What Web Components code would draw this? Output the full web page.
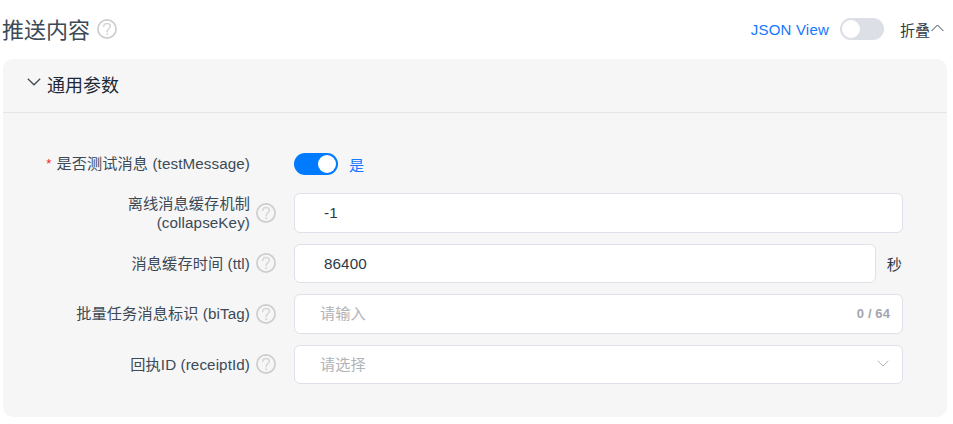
<!DOCTYPE html>
<html lang="zh">
<head>
<meta charset="utf-8">
<title>推送内容</title>
<style>
  html, body { margin: 0; background: #fff; }
  body { font-family: "Liberation Sans", "Noto Sans CJK SC", sans-serif; color: #2c3a47; }
</style>
</head>
<body>
<push-page>
  <span slot="title">推送内容</span>
  <param-panel heading="通用参数">
    <form-row required style="height:37px">
      <span slot="label">是否测试消息 (testMessage)</span>
      <toggle-switch on></toggle-switch>
      <span style="color:#1677ff;margin-left:11px">是</span>
    </form-row>
    <form-row help>
      <span slot="label">离线消息缓存机制<br>(collapseKey)</span>
      <text-box value="-1"></text-box>
    </form-row>
    <form-row help>
      <span slot="label">消息缓存时间 (ttl)</span>
      <text-box value="86400"></text-box>
      <span style="color:#2c3a47;margin-left:11px;margin-right:1px">秒</span>
    </form-row>
    <form-row help>
      <span slot="label">批量任务消息标识 (biTag)</span>
      <text-box placeholder="请输入" count="0 / 64"></text-box>
    </form-row>
    <form-row help>
      <span slot="label">回执ID (receiptId)</span>
      <text-box placeholder="请选择" select></text-box>
    </form-row>
  </param-panel>
</push-page>

<script>
const helpIcon = `<svg width="20" height="20" viewBox="0 0 20 20" fill="none"><circle cx="10" cy="10" r="9.1" stroke="#cdcdcd" stroke-width="1.7"/><path d="M6.700 7.600c0-2 1.500-3.200 3.400-3.200s3.300 1.200 3.300 2.800c0 1.300-.8 1.900-1.700 2.600-.9.700-1.500 1.200-1.500 2.300v.6" stroke="#d6d6d6" stroke-width="1.500" stroke-linecap="round"/><circle cx="10.200" cy="15.200" r="1" fill="#d6d6d6"/></svg>`

class HelpIcon extends HTMLElement {
  constructor () {
    super()
    this.attachShadow({mode: 'open'}).innerHTML = `
      <style>:host{display:inline-flex;flex:none;width:20px;height:20px}</style>${helpIcon}`
  }
}
customElements.define('help-icon', HelpIcon)

class ToggleSwitch extends HTMLElement {
  constructor () {
    super()
    const on = this.hasAttribute('on')
    this.attachShadow({mode: 'open'}).innerHTML = `
      <style>
        :host{display:inline-flex;flex:none;width:44px;height:22px;border-radius:11px;box-sizing:border-box;padding:2px;
          background:${on ? '#007aff' : '#dcdfe6'};justify-content:${on ? 'flex-end' : 'flex-start'}}
        i{display:block;width:18px;height:18px;border-radius:50%;background:#fff}
      </style><i></i>`
  }
}
customElements.define('toggle-switch', ToggleSwitch)

class TextBox extends HTMLElement {
  constructor () {
    super()
    const value = this.getAttribute('value')
    const ph = this.getAttribute('placeholder')
    const count = this.getAttribute('count')
    const select = this.hasAttribute('select')
    this.attachShadow({mode: 'open'}).innerHTML = `
      <style>
        :host{display:flex;flex:1;min-width:0;height:100%;box-sizing:border-box;align-items:center;background:#fff;
          border:1px solid #dfe1ea;border-radius:6px}
        .val{flex:1;padding-left:29px;color:#2c3a47}
        .ph{flex:1;padding:0 0 3px 25px;color:#b1b3b8}
        .count{font-size:13px;letter-spacing:.1px;font-weight:bold;color:#a3a6ad;margin-right:12px}
        svg{margin:0 13px 2px 0}
      </style>
      ${value ? `<span class="val">${value}</span>` : `<span class="ph">${ph}</span>`}
      ${count ? `<span class="count">${count}</span>` : ''}
      ${select ? `<svg width="12" height="7" viewBox="0 0 12 7" fill="none"><path d="M.7.8 6 6l5.3-5.2" stroke="#b1b3b8"/></svg>` : ''}`
  }
}
customElements.define('text-box', TextBox)

class FormRow extends HTMLElement {
  constructor () {
    super()
    const help = this.hasAttribute('help')
    const req = this.hasAttribute('required')
    this.attachShadow({mode: 'open'}).innerHTML = `
      <style>
        :host{display:flex;align-items:stretch;height:39.5px;font-size:15.2px;letter-spacing:.1px;color:#3c4a56}
        .label{flex:none;width:244px;display:flex;align-items:center;justify-content:flex-end;text-align:right;
          line-height:19px;padding-right:18px;box-sizing:border-box;white-space:nowrap}
        .star{color:#f5222d;margin-right:5px;font-size:13px}
        help-icon{margin-left:6px}
        .label.nohelp{padding-right:44px}
        .ctl{flex:1;display:flex;align-items:center;min-width:0}
      </style>
      <div class="label ${help ? '' : 'nohelp'}">
        ${req ? '<span class="star">*</span>' : ''}<span><slot name="label"></slot></span>
        ${help ? '<help-icon></help-icon>' : ''}
      </div>
      <div class="ctl"><slot></slot></div>`
  }
}
customElements.define('form-row', FormRow)

class ParamPanel extends HTMLElement {
  constructor () {
    super()
    this.attachShadow({mode: 'open'}).innerHTML = `
      <style>
        :host{display:block;margin:0 6px 0 3px;background:#f6f6f7;border-radius:10px}
        .head{display:flex;align-items:center;height:54px;box-sizing:border-box;border-bottom:1px solid #e4e5e8;padding:0 0 4px 24px;
          font-size:18px;color:#1f2933}
        svg{margin-right:6px;margin-top:-4px}
        .body{display:flex;flex-direction:column;gap:11px;padding:32px 44px 33px 47px}
      </style>
      <div class="head">
        <svg width="14" height="8" viewBox="0 0 14 8" fill="none"><path d="M.8.8 7 6.800 13.200.8" stroke="#3c4a56" stroke-width="1.2"/></svg>
        <span>${this.getAttribute('heading')}</span>
      </div>
      <div class="body"><slot></slot></div>`
  }
}
customElements.define('param-panel', ParamPanel)

class PushPage extends HTMLElement {
  constructor () {
    super()
    this.attachShadow({mode: 'open'}).innerHTML = `
      <style>
        :host{display:block}
        .top{display:flex;align-items:center;height:58px;padding:0 9px 1px 2px}
        .title{font-size:22px;color:#3c4a56;margin-right:7px;margin-top:-3px}
        .spacer{flex:1}
        .json{font-size:15px;letter-spacing:.2px;color:#1677ff;margin-right:11px}
        .fold{font-size:15px;color:#2c3a47;margin-left:16px;display:flex;align-items:center;gap:1px}
        .fold svg{margin-top:-3px}
      </style>
      <div class="top">
        <span class="title"><slot name="title"></slot></span><help-icon></help-icon>
        <span class="spacer"></span>
        <span class="json">JSON View</span>
        <toggle-switch></toggle-switch>
        <span class="fold">折叠<svg width="13" height="8" viewBox="0 0 13 8" fill="none"><path d="M.6 7 6.500 1l5.900 6" stroke="#3c4a56"/></svg></span>
      </div>
      <slot></slot>`
  }
}
customElements.define('push-page', PushPage)
</script>
</body>
</html>
